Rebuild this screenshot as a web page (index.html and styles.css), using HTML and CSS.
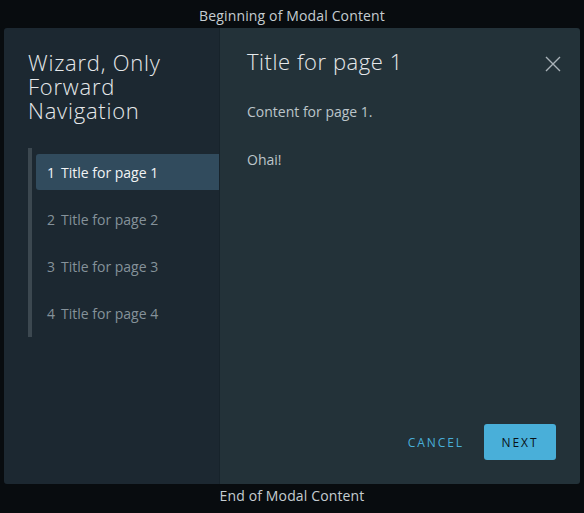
FILE: index.html
```html
<!DOCTYPE html>
<html>
<head>
<meta charset="utf-8">
<link rel="stylesheet" href="styles.css">
</head>
<body>
<div class="edge-label top">Beginning of Modal Content</div>
<div class="modal">
  <nav class="nav">
    <h2 class="nav-title">Wizard, Only Forward Navigation</h2>
    <ol class="steps">
      <li class="step active"><span class="num">1</span>Title for page 1</li>
      <li class="step"><span class="num">2</span>Title for page 2</li>
      <li class="step"><span class="num">3</span>Title for page 3</li>
      <li class="step"><span class="num">4</span>Title for page 4</li>
    </ol>
  </nav>
  <section class="main">
    <header class="main-head">
      <h3 class="page-title">Title for page 1</h3>
      <button class="close" aria-label="Close">
        <svg width="16" height="16" viewBox="0 0 16 16"><path d="M1 1 L15 15 M15 1 L1 15" stroke="#a9b2b8" stroke-width="1.4" fill="none"/></svg>
      </button>
    </header>
    <div class="body">
      <p>Content for page 1.</p>
      <p>Ohai!</p>
    </div>
    <footer class="foot">
      <button class="btn link">CANCEL</button>
      <button class="btn primary">NEXT</button>
    </footer>
  </section>
</div>
<div class="edge-label bottom">End of Modal Content</div>
</body>
</html>
```
FILE: styles.css
```css
* { box-sizing: border-box; }
html, body { margin: 0; padding: 0; }
body {
  background: #080c0f;
  font-family: "Open Sans", "Noto Sans", sans-serif;
  width: 584px;
  height: 513px;
  overflow: hidden;
}
.edge-label {
  color: #c5ccd1;
  font-size: 14px;
  letter-spacing: 0.01em;
  text-align: center;
  height: 28px;
  line-height: 32px;
}
.edge-label.bottom { line-height: 24px; }
.modal {
  margin: 0 4px;
  height: 456px;
  display: flex;
  border-radius: 3px;
  overflow: hidden;
}
.nav {
  width: 216px;
  background: #1c2831;
  border-right: 1px solid #17232b;
  padding: 22px 0 0 24px;
}
.nav-title {
  margin: 0;
  font-size: 22px;
  line-height: 24px;
  font-weight: 300;
  color: #e6e9eb;
  padding-right: 24px;
  letter-spacing: 0.035em;
}
.steps {
  list-style: none;
  margin: 26px 0 0 0;
  padding: 6px 0 6px 4px;
  border-left: 4px solid #3c4850;
  display: flex;
  flex-direction: column;
  gap: 11px;
}
.step {
  height: 36px;
  line-height: 38px;
  padding-left: 11px;
  font-size: 14px;
  color: #85929a;
  border-radius: 3px 0 0 3px;
}
.step.active {
  background: #314b5d;
  color: #f2f4f5;
}
.num { margin-right: 6px; }
.main {
  flex: 1;
  background: #233239;
  display: flex;
  flex-direction: column;
  padding: 21px 24px 24px 27px;
}
.main-head {
  display: flex;
  justify-content: space-between;
  align-items: flex-start;
}
.page-title {
  margin: 0;
  font-size: 22px;
  line-height: 24px;
  font-weight: 300;
  color: #e6e9eb;
  letter-spacing: 0.025em;
}
.close {
  background: none;
  border: 0;
  padding: 0;
  margin: 7px -5px 0 0;
  width: 16px;
  height: 16px;
  display: flex;
}
.body { flex: 1; padding-top: 27px; }
.body p {
  margin: 0 0 24px 0;
  font-size: 14px;
  line-height: 24px;
  color: #bcc5ca;
}
.foot {
  display: flex;
  justify-content: flex-end;
  gap: 8px;
}
.btn {
  height: 36px;
  border: 0;
  border-radius: 3px;
  font-family: inherit;
  font-size: 12px;
  font-weight: 500;
  letter-spacing: 0.16em;
  padding: 0 12px;
  background: none;
}
.btn.link { color: #49afd9; }
.btn.primary {
  background: #49afd9;
  color: #0b1216;
  width: 72px;
  padding: 0;
}
```
